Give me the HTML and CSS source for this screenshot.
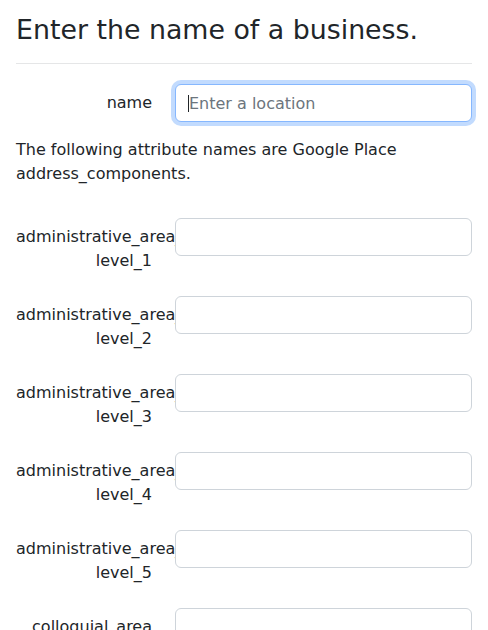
FILE: index.html
```html
<!DOCTYPE html>
<html lang="en">
<head>
<meta charset="utf-8">
<title>Business lookup</title>
<link rel="stylesheet" href="styles.css">
</head>
<body>
<main class="page">
  <h3 class="title">Enter the name of a business.</h3>
  <hr class="rule">
  <form class="form">
    <div class="row">
      <label class="label" for="name">name</label>
      <div class="field-wrap">
        <input class="field focused" id="name" type="text" placeholder="Enter a location">
        <span class="caret"></span>
      </div>
    </div>
    <p class="note">The following attribute names are Google Place address_components.</p>
    <div class="rows">
      <div class="row">
        <label class="label" for="a1">administrative_area_<wbr>level_1</label>
        <input class="field" id="a1" type="text">
      </div>
      <div class="row">
        <label class="label" for="a2">administrative_area_<wbr>level_2</label>
        <input class="field" id="a2" type="text">
      </div>
      <div class="row">
        <label class="label" for="a3">administrative_area_<wbr>level_3</label>
        <input class="field" id="a3" type="text">
      </div>
      <div class="row">
        <label class="label" for="a4">administrative_area_<wbr>level_4</label>
        <input class="field" id="a4" type="text">
      </div>
      <div class="row">
        <label class="label" for="a5">administrative_area_<wbr>level_5</label>
        <input class="field" id="a5" type="text">
      </div>
      <div class="row">
        <label class="label" for="c1">colloquial_area</label>
        <input class="field" id="c1" type="text">
      </div>
      <div class="row">
        <label class="label" for="c2">country</label>
        <input class="field" id="c2" type="text">
      </div>
    </div>
  </form>
</main>
</body>
</html>
```

FILE: styles.css
```css
* { box-sizing: border-box; }

html, body {
  margin: 0;
  padding: 0;
  background: #fff;
}

body {
  font-family: "DejaVu Sans", sans-serif;
  font-size: 16px;
  line-height: 24px;
  color: #212529;
}

.page {
  padding: 14px 16px 0 16px;
}

.title {
  margin: 0;
  font-size: 26.8px;
  line-height: 32px;
  font-weight: 400;
}

.rule {
  margin: 17px 0 20px 0;
  border: 0;
  border-top: 1px solid #e5e6e7;
  height: 0;
}

.form { margin: 0; }

.row {
  display: grid;
  grid-template-columns: 136px 1fr;
  column-gap: 23px;
  align-items: start;
}

.rows .row {
  margin-bottom: 16px;
}

.label {
  text-align: right;
  padding-top: 7px;
  padding-bottom: 7px;
  line-height: 24px;
}

.field-wrap {
  position: relative;
}

.caret {
  position: absolute;
  left: 13px;
  top: 11px;
  width: 1px;
  height: 17px;
  background: #212529;
}

.field {
  display: block;
  width: 100%;
  height: 38px;
  padding: 6px 12px 6px 13px;
  font-family: "DejaVu Sans", sans-serif;
  font-size: 16px;
  line-height: 24px;
  color: #212529;
  background: #fff;
  border: 1px solid #ced4da;
  border-radius: 6px;
  outline: none;
}

.field::placeholder {
  color: #6c757d;
  opacity: 1;
}

.field.focused {
  border-color: #86b7fe;
  box-shadow: 0 0 0 4px rgba(13, 110, 253, 0.25);
}

.note {
  margin: 16px 0 32px 0;
}
```
